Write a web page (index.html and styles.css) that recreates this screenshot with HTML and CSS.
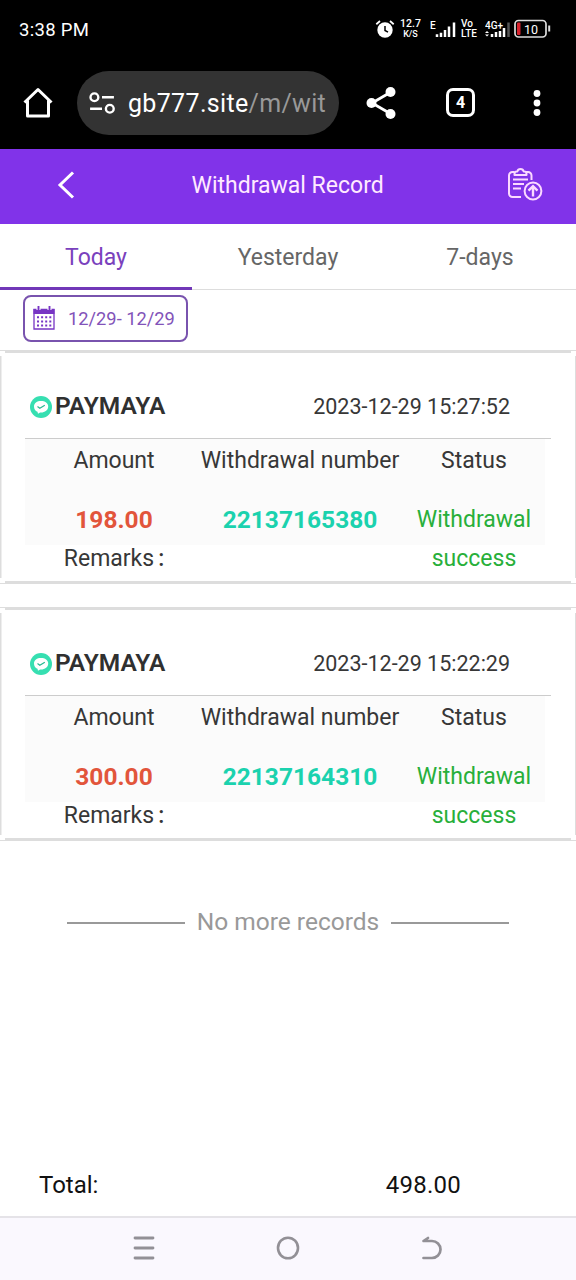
FILE: index.html
```html
<!DOCTYPE html>
<html lang="en">
<head>
<meta charset="utf-8">
<title>Withdrawal Record</title>
<link rel="stylesheet" href="styles.css">
</head>
<body>
<div class="phone">
  <div class="status-bar">
    <span class="clock">3:38 PM</span>
    <svg class="alarm" width="20" height="20" viewBox="0 0 20 20"><circle cx="10" cy="11" r="7.700" fill="#fff"/><path d="M1.300 5.200 5 2M18.700 5.200 15 2" stroke="#fff" stroke-width="1.800"/><path d="M10 7v4.500l3 1.700" fill="none" stroke="#000" stroke-width="1.500"/></svg>
    <span class="tiny speed"><b>12.7</b><b class="unit">K/S</b></span>
    <svg class="signal" width="26" height="20" viewBox="0 0 26 20"><path d="M7 18v-2.800M11 18v-4.200M15 18v-7M19 18v-10.500M24 18V3.500" stroke="#fff" stroke-width="2.500"/><text class="net-type" x="0" y="10">E</text></svg>
    <span class="tiny volte"><b>Vo</b><b>LTE</b></span>
    <svg class="signal-4g" width="26" height="20" viewBox="0 0 26 20"><path d="M7 18v-3M11 18v-5M15 18v-6M19 18V9" stroke="#fff" stroke-width="2.500"/><path d="M23.500 18V3.500" stroke="#555" stroke-width="2.500"/><path d="M0 14l2-2 2 2zM0 15.500l2 2 2-2z" fill="#fff"/><text class="net-4g" x="0" y="10">4G+</text></svg>
    <svg class="battery" width="38" height="20" viewBox="0 0 38 20"><rect x="1" y="1.500" width="31" height="16.500" rx="3.500" fill="none" stroke="#ddd" stroke-width="1.700"/><rect x="3" y="3.500" width="3.500" height="12.500" rx="1" fill="#d8232e"/><path d="M35.200 6.500v6" stroke="#ddd" stroke-width="2"/><text class="battery-level" x="17" y="14.500">10</text></svg>
  </div>
  <div class="browser-bar">
    <svg class="home" width="30" height="32" viewBox="0 0 30 32"><path d="M1.500 15.500 15 2.500l13.500 13M4.500 13.500V29h21V13.500" fill="none" stroke="#fff" stroke-width="3" stroke-linejoin="round"/></svg>
    <div class="address">
      <svg width="26" height="22" viewBox="0 0 24 20" fill="none" stroke="#fff" stroke-width="2.200"><circle cx="5" cy="4.700" r="3.600"/><path d="M12 4.700h11M1 15.300h11"/><circle cx="19.200" cy="15.300" r="3.600"/></svg>
      <span class="url">gb777.site<span class="path">/m/wit</span></span>
    </div>
    <svg class="share" width="30" height="34" viewBox="0 0 30 34"><path d="M25 6 6 17l19 11" fill="none" stroke="#fff" stroke-width="2.800"/><g fill="#fff"><circle cx="24.500" cy="6" r="5"/><circle cx="5.500" cy="17" r="5"/><circle cx="24.500" cy="28" r="5"/></g></svg>
    <span class="tab-count">4</span>
    <svg class="more" width="8" height="28" viewBox="0 0 8 28" fill="#fff"><circle cx="4" cy="4.500" r="3.400"/><circle cx="4" cy="14" r="3.400"/><circle cx="4" cy="23.500" r="3.400"/></svg>
  </div>
  <header class="app-header">
    <svg class="back" width="18" height="30" viewBox="0 0 18 30"><path d="M16 2.500 3 15l13 12.500" fill="none" stroke="#fff" stroke-width="3"/></svg>
    <h1>Withdrawal Record</h1>
    <svg class="report" width="36" height="36" viewBox="0 0 36 36" fill="none" stroke="#fbd9ff" stroke-width="2"><path d="M7.500 5H5.500A3.500 3.500 0 0 0 2 8.500v18a3.500 3.500 0 0 0 3.500 3.500H14M19 5h2A3.500 3.500 0 0 1 24.500 8.500V13"/><path d="M7.500 8h12V6.800a2.300 2.300 0 0 0-2.300-2.300H16.700a3.300 3.300 0 0 0-6.400 0h-.5a2.300 2.300 0 0 0-2.300 2.300z" stroke-linejoin="round"/><path d="M6 12.500h15M6 17h11M6 21.500h8"/><circle cx="26" cy="24" r="8.400"/><path d="M26 29.500V19.500M21.500 23.700l4.500-4.500 4.500 4.500" stroke-width="2.400"/></svg>
  </header>
  <nav class="tabs">
    <span class="tab active">Today</span>
    <span class="tab">Yesterday</span>
    <span class="tab">7-days</span>
  </nav>
  <div class="filter">
    <div class="date-range">
      <svg width="22" height="24" viewBox="0 0 22 24"><path d="M1 3.500h20V23H1z" fill="none" stroke="#7735c4" stroke-width="1.300"/><path d="M.5 3h21v5H.5z" fill="#7735c4"/><path d="M5.500 0v4M16.500 0v4" stroke="#fff" stroke-width="4"/><path d="M5.500 0v5M16.500 0v5" stroke="#7735c4" stroke-width="1.900"/><path d="M4 11.200h14.500M4 15.400h14.500M4 19.600h14.500" stroke="#7735c4" stroke-width="2" stroke-dasharray="2 2.100"/></svg>
      <span>12/29- 12/29</span>
    </div>
  </div>
  <main class="records">
    <section class="card">
      <div class="card-head">
        <svg width="22" height="22" viewBox="0 0 22 22"><circle cx="11" cy="11" r="11" fill="#36dfb1"/><path d="M4 10.500C4 7 7 5 11 5s7.200 2 7.200 5.500S15 16.500 11 16.500c-1 0-1.700.5-3 1.200l-.5-1.900C5.200 14.800 4 13 4 10.500z" fill="#fff"/><path d="M7.500 10.500l2.300 1.700 5-3" fill="none" stroke="#28b991" stroke-width="1.200"/></svg>
        <strong>PAYMAYA</strong>
        <time>2023-12-29 15:27:52</time>
      </div>
      <div class="table">
        <span class="label">Amount</span><span class="label">Withdrawal number</span><span class="label">Status</span>
        <b class="amount">198.00</b><b class="number">22137165380</b><span class="state">Withdrawal success</span>
        <span class="remarks">Remarks<span class="colon">:</span></span>
      </div>
    </section>
    <section class="card">
      <div class="card-head">
        <svg width="22" height="22" viewBox="0 0 22 22"><circle cx="11" cy="11" r="11" fill="#36dfb1"/><path d="M4 10.500C4 7 7 5 11 5s7.200 2 7.200 5.500S15 16.500 11 16.500c-1 0-1.700.5-3 1.200l-.5-1.900C5.200 14.800 4 13 4 10.500z" fill="#fff"/><path d="M7.500 10.500l2.300 1.700 5-3" fill="none" stroke="#28b991" stroke-width="1.200"/></svg>
        <strong>PAYMAYA</strong>
        <time>2023-12-29 15:22:29</time>
      </div>
      <div class="table">
        <span class="label">Amount</span><span class="label">Withdrawal number</span><span class="label">Status</span>
        <b class="amount">300.00</b><b class="number">22137164310</b><span class="state">Withdrawal success</span>
        <span class="remarks">Remarks<span class="colon">:</span></span>
      </div>
    </section>
    <div class="end"><span>No more records</span></div>
  </main>
  <footer class="total"><span>Total:</span><span class="sum">498.00</span></footer>
  <div class="system-nav">
    <svg width="24" height="26" viewBox="0 0 24 26"><path d="M3 3h18M3 13h18M3 23h18" stroke="#929096" stroke-width="2.800" stroke-linecap="round"/></svg>
    <svg width="24" height="26" viewBox="0 0 24 26"><ellipse cx="12" cy="13" rx="10" ry="10.300" fill="none" stroke="#929096" stroke-width="2.600"/></svg>
    <svg width="24" height="26" viewBox="0 0 24 26"><path d="M8 3 3.500 6H12a8.500 8.500 0 0 1 0 17H3.500" fill="none" stroke="#929096" stroke-width="2.700" stroke-linecap="round" stroke-linejoin="round"/></svg>
  </div>
</div>
</body>
</html>
```

FILE: styles.css
```css
* { box-sizing: border-box; }
body { margin: 0; background: #fff; color: #373737; font-family: Roboto, "Liberation Sans", sans-serif; font-size: 23px; }
svg { display: block; flex: none; }
.phone { width: 576px; height: 1280px; display: flex; flex-direction: column; overflow: hidden; }
.status-bar { height: 58px; flex: none; background: #000; color: #fff; display: flex; align-items: center; padding-left: 19px; }
.clock { font-size: 18.5px; width: 356px; letter-spacing: .3px; padding-top: 1px; }
.tiny { display: flex; flex-direction: column; font-size: 10.5px; line-height: 10px; }
.tiny b { font-weight: 500; }
.tiny .unit { font-size: 9px; }
.speed { width: 21px; margin-left: 5px; align-items: center; }
.signal { margin-left: 9px; }
.volte { width: 17px; margin-left: 5px; font-size: 10px; }
.signal-4g { margin-left: 7px; }
.battery { margin-left: 3px; }
.net-type, .net-4g { fill: #fff; font-size: 10px; font-weight: 500; }
.battery-level { fill: #fff; font-size: 12.5px; text-anchor: middle; }
.browser-bar { height: 91px; flex: none; background: #000; color: #fff; display: flex; align-items: center; padding: 0 0 2px 23px; }
.address { margin-left: 24px; width: 262px; height: 64px; border-radius: 32px; background: #333; display: flex; align-items: center; padding: 0 0 0 12px; }
.url { font-size: 25px; letter-spacing: .33px; margin-left: 13px; white-space: nowrap; padding-top: 2px; }
.path { color: #999; }
.share { margin-left: 27px; }
.tab-count { width: 29px; height: 29px; margin-left: 50px; border: 3px solid #fff; border-radius: 7px; display: flex; align-items: center; justify-content: center; font-size: 16px; font-weight: 700; }
.more { margin-left: 58px; }
.app-header { height: 75px; flex: none; background: #8133e9; color: #ffeaff; display: flex; align-items: center; padding: 0 33px 4px 57px; justify-content: space-between; }
.app-header h1 { margin: 0 7px 0 0; padding-top: 2px; font-size: 23px; font-weight: 400; width: 192px; white-space: nowrap; }
.tabs { height: 66px; flex: none; display: grid; grid-template-columns: repeat(3, 1fr); border-bottom: 1px solid #ddd; }
.tab { display: flex; align-items: center; justify-content: center; height: 66px; color: #666; }
.tab.active { color: #7a41bd; border-bottom: 3px solid #7138b8; padding-top: 3px; }
.filter { height: 60px; flex: none; padding: 5px 23px; }
.date-range { width: 165px; height: 47px; border: 2px solid #7953ae; border-radius: 8px; display: flex; align-items: center; padding: 0 0 1px 8px; font-size: 18.300px; color: #8253b9; gap: 13px; white-space: nowrap; }
.records { flex: 1; }
.card {
  height: 234px;
  margin-bottom: 23px;
  padding: 3px 25px;
  background:
    linear-gradient(#ddd, #ddd) 5px 1px / 566px 2px no-repeat,
    linear-gradient(#ddd, #ddd) 0 0 / 100% 1px no-repeat,
    linear-gradient(#ddd, #ddd) 5px 231px / 566px 2px no-repeat,
    linear-gradient(#ddd, #ddd) 0 233px / 100% 1px no-repeat,
    linear-gradient(#ddd, #ddd) 0 6px / 1.5px 222px no-repeat,
    linear-gradient(#ddd, #ddd) 100% 6px / 1.5px 222px no-repeat;
}
.card-head { height: 86px; border-bottom: 1px solid #ccc; display: flex; align-items: center; padding: 22px 41px 0 5px; }
.card-head strong { font-size: 24.500px; font-weight: 600; color: #303030; margin-left: 3px; line-height: 28px; padding-bottom: 2px; }
.card-head time { font-size: 21.500px; margin-left: auto; }
.table { display: grid; grid-template-columns: 178px 194px 154px; grid-template-rows: 43px 19px 38.5px 38.5px; text-align: center; line-height: 38.5px; background: linear-gradient(#fbfbfb, #fbfbfb) 0 0 / 520px 106px no-repeat; }
.label { line-height: 43px; white-space: nowrap; justify-self: center; }
.label:nth-child(2) { margin: 0 -4px; }
.amount { grid-row: 3; grid-column: 1; color: #e2553b; font-size: 24.500px; }
.number { grid-row: 3; grid-column: 2; color: #1bd2ae; font-size: 24.500px; }
.state { grid-row: 3 / 5; grid-column: 3; color: #28af3a; padding: 0 15px; }
.remarks { grid-row: 4; grid-column: 1; }
.colon { margin-left: 4px; font-weight: 500; }
.end { display: flex; align-items: center; gap: 12px; margin: 66px 67px 0; color: #999; font-size: 24.500px; white-space: nowrap; }
.end::before, .end::after { content: ""; flex: 1; height: 2px; background: #999; margin-top: 2px; }
.total { height: 64px; flex: none; display: flex; justify-content: space-between; align-items: center; padding: 2px 115px 0 39px; color: #111; font-size: 24px; }
.sum { letter-spacing: .25px; }
.system-nav { height: 64px; flex: none; background: #faf8fe; border-top: 2px solid #e5e3e8; display: flex; justify-content: center; gap: 120px; align-items: center; padding-bottom: 2px; }
```
